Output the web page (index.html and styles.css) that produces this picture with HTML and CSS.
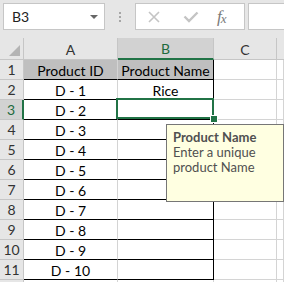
FILE: index.html
```html
<!DOCTYPE html>
<html>
<head>
<meta charset="utf-8">
<link rel="stylesheet" href="styles.css">
</head>
<body>
<div class="app">
  <div class="toolbar">
    <div class="namebox"><span>B3</span><span class="caret"></span></div>
    <div class="dots"><i></i><i></i><i></i></div>
    <div class="fxbox">
      <svg class="ico" width="14" height="14" viewBox="0 0 14 14"><path d="M2 2 L12 12 M12 2 L2 12" stroke="#c4c4c4" stroke-width="1.6" fill="none"/></svg>
      <svg class="ico" width="16" height="14" viewBox="0 0 16 14"><path d="M1.5 6.5 L6 11 L14.5 2.5" stroke="#c4c4c4" stroke-width="2.4" fill="none"/></svg>
      <span class="fx">f<span class="fx-x">x</span></span>
    </div>
    <div class="formula"></div>
  </div>
  <div class="sheet">
    <div class="grid">
      <div class="corner"><span class="tri"></span></div>
      <div class="ch">A</div>
      <div class="ch sel">B</div>
      <div class="ch">C</div>
      <div class="ch last"></div>

      <div class="rh">1</div>
      <div class="c head t">Product ID</div>
      <div class="c head t r">Product Name</div>
      <div class="c"></div><div class="c"></div>

      <div class="rh">2</div>
      <div class="c t">D - 1</div>
      <div class="c t r">Rice</div>
      <div class="c"></div><div class="c"></div>

      <div class="rh sel">3</div>
      <div class="c t">D - 2</div>
      <div class="c t r"></div>
      <div class="c"></div><div class="c"></div>

      <div class="rh">4</div>
      <div class="c t">D - 3</div>
      <div class="c t r"></div>
      <div class="c"></div><div class="c"></div>

      <div class="rh">5</div>
      <div class="c t">D - 4</div>
      <div class="c t r"></div>
      <div class="c"></div><div class="c"></div>

      <div class="rh">6</div>
      <div class="c t">D - 5</div>
      <div class="c t r"></div>
      <div class="c"></div><div class="c"></div>

      <div class="rh">7</div>
      <div class="c t">D - 6</div>
      <div class="c t r"></div>
      <div class="c"></div><div class="c"></div>

      <div class="rh">8</div>
      <div class="c t">D - 7</div>
      <div class="c t r"></div>
      <div class="c"></div><div class="c"></div>

      <div class="rh">9</div>
      <div class="c t">D - 8</div>
      <div class="c t r"></div>
      <div class="c"></div><div class="c"></div>

      <div class="rh">10</div>
      <div class="c t">D - 9</div>
      <div class="c t r"></div>
      <div class="c"></div><div class="c"></div>

      <div class="rh">11</div>
      <div class="c t">D - 10</div>
      <div class="c t r"></div>
      <div class="c"></div><div class="c"></div>

      <div class="rh end"></div>
      <div class="c end"></div><div class="c end"></div><div class="c end"></div><div class="c end"></div>
    </div>
    <div class="selbox"><span class="handle"></span></div>
    <div class="tip">
      <div class="tip-title">Product Name</div>
      <div class="tip-body">Enter a unique product Name</div>
    </div>
  </div>
</div>
</body>
</html>
```

FILE: styles.css
```css
* { box-sizing: border-box; }
html, body { margin: 0; padding: 0; overflow: hidden; }
body {
  width: 284px;
  height: 282px;
  background: #e6e6e6;
  font-family: Lato, "Liberation Sans", sans-serif;
}
.app { width: 284px; }

.toolbar {
  height: 38px;
  display: flex;
  align-items: flex-start;
  padding: 3px 0 0 3px;
  background: #e6e6e6;
}
.namebox {
  width: 102px;
  height: 27px;
  background: #fff;
  border: 1px solid #c6c6c6;
  display: flex;
  align-items: center;
  justify-content: space-between;
  padding: 0 6px 0 8px;
  font-size: 14px;
  color: #222;
}
.caret {
  width: 0; height: 0;
  border-left: 4px solid transparent;
  border-right: 4px solid transparent;
  border-top: 4px solid #666;
}
.dots {
  width: 30px;
  height: 27px;
  display: flex;
  flex-direction: column;
  align-items: center;
  justify-content: center;
  gap: 2px;
}
.dots i {
  display: block;
  width: 2px; height: 2px;
  background: #a6a6a6;
}
.fxbox {
  width: 110px;
  height: 27px;
  background: #fff;
  border: 1px solid #c6c6c6;
  display: flex;
  align-items: center;
  padding-left: 11px;
}
.fxbox .ico:first-child { margin-right: 22px; }
.fxbox .ico:nth-child(2) { margin-right: 18px; }
.fx {
  font-family: "Liberation Serif", serif;
  font-style: italic;
  font-size: 17px;
  color: #7a7a7a;
  line-height: 1;
  letter-spacing: -1px;
}
.fx-x { font-size: 13px; position: relative; top: 1px; }
.formula {
  margin-left: 3px;
  flex: 1;
  height: 27px;
  background: #fff;
  border: 1px solid #c6c6c6;
  border-right: none;
}

.sheet { position: relative; background: #fff; }
.grid {
  display: grid;
  grid-template-columns: 24px 94px 96px 63px 1fr;
  grid-template-rows: 22px repeat(11, 20px) 4px;
}
.corner, .ch, .rh {
  background: #e6e6e6;
  border-right: 1px solid #c6c6c6;
  border-bottom: 1px solid #c6c6c6;
  color: #333;
  font-size: 14px;
  display: flex;
  align-items: center;
  justify-content: center;
}
.corner { position: relative; }
.tri {
  position: absolute;
  right: 3px;
  bottom: 3px;
  width: 0; height: 0;
  border-left: 11px solid transparent;
  border-bottom: 11px solid #b4b4b4;
}
.ch { padding-top: 1px; }
.ch.last { border-right: none; }
.ch.sel {
  background: #d2d2d2;
  color: #1e6b3e;
  border-bottom: 2px solid #217346;
}
.rh.sel {
  background: #d2d2d2;
  color: #1e6b3e;
  border-right: 2px solid #217346;
}
.c {
  border-right: 1px solid #d4d4d4;
  border-bottom: 1px solid #d4d4d4;
  background: #fff;
  font-size: 14px;
  color: #000;
  display: flex;
  align-items: center;
  justify-content: center;
  padding-top: 1px;
  white-space: nowrap;
}
.c.t { border-bottom-color: #000; }
.c.t.r { border-right-color: #000; }
.c.head { background: #bfbfbf; }
.end { border-bottom: none; }

.selbox {
  position: absolute;
  left: 116px;
  top: 60px;
  width: 98px;
  height: 21px;
  border: 2px solid #217346;
}
.handle {
  position: absolute;
  right: -5px;
  bottom: -5px;
  width: 6px;
  height: 6px;
  background: #217346;
  outline: 1px solid #fff;
}
.tip {
  position: absolute;
  left: 166px;
  top: 86px;
  width: 118px;
  height: 78px;
  background: #ffffe1;
  border: 1px solid #767676;
  padding: 5px 6px;
  font-size: 13px;
  line-height: 15px;
  color: #505050;
}
.tip-title { font-weight: bold; }
```
